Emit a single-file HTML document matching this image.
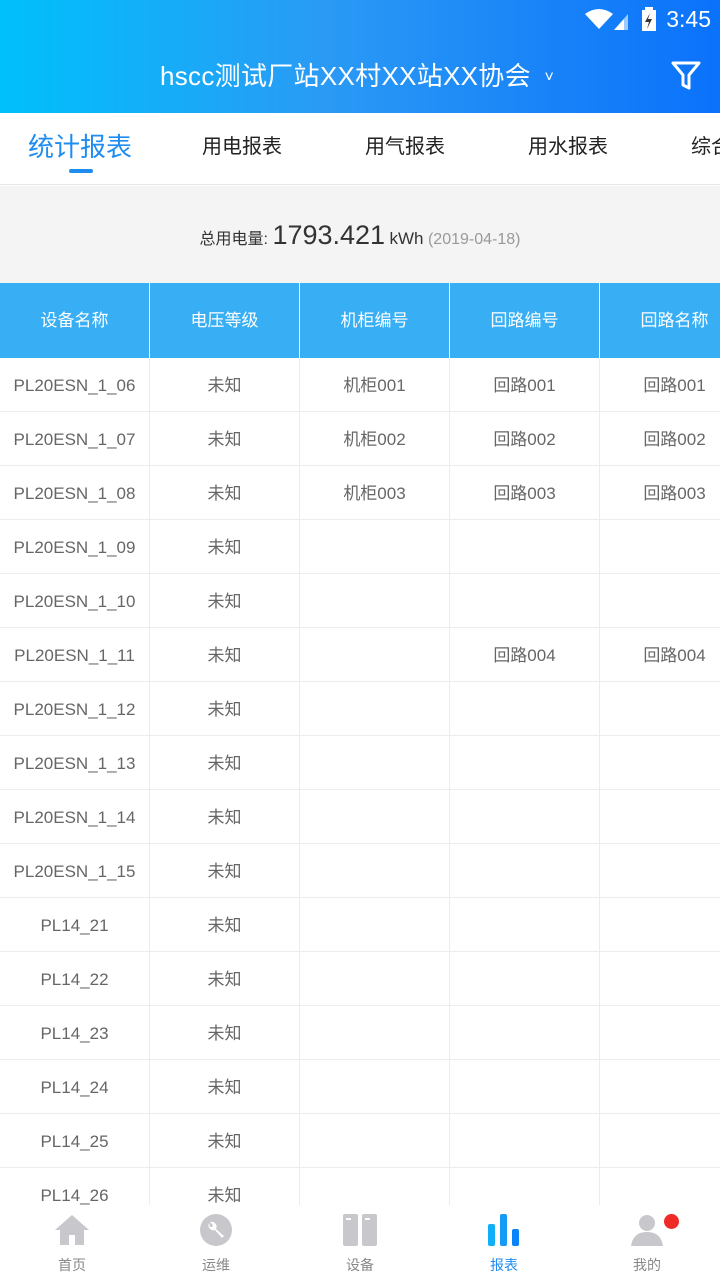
<!DOCTYPE html>
<html><head><meta charset="utf-8"><style>
*{margin:0;padding:0;box-sizing:border-box}
body{width:720px;height:1280px;overflow:hidden;position:relative;font-family:"Liberation Sans","Noto Sans CJK SC",sans-serif;background:#fff}
.hdr{position:absolute;left:0;top:0;width:720px;height:113px;background:linear-gradient(90deg,#00c0fb 0%,#2a9af5 45%,#0a72fb 100%)}
.time{position:absolute;right:9px;top:6px;color:#fff;font-size:23px}
.title{position:absolute;left:160px;top:56px;color:#fff;font-size:26px;letter-spacing:0.3px}
.tabs{position:absolute;top:113px;left:0;width:720px;height:72px;border-bottom:1px solid #e8e8e8;background:#fff}
.tab{position:absolute;top:17px;font-size:20px;color:#222;white-space:nowrap}
.sum{position:absolute;top:186px;left:0;width:720px;height:97px;background:#f4f4f4;text-align:center}
.tbl{position:absolute;top:283px;left:0;width:750px}
.row{display:flex;height:54px;border-bottom:1px solid #ececec}
.row div{width:150px;flex:none;border-right:1px solid #ececec;text-align:center;line-height:56px;font-size:17px;color:#666}
.th{height:75px;background:#38aef5;border:none}
.th div{line-height:76px;color:#fff;border-right:1px solid #fff}
.nav{position:absolute;top:1205px;left:0;width:720px;height:75px;background:#fff}
.ni{position:absolute;top:8px;width:80px;text-align:center;font-size:14px;color:#888}
.ni svg{display:block;margin:0 auto 8px}
</style></head><body>
<div class="hdr">
<svg style="position:absolute;left:584px;top:7px" width="76" height="24" viewBox="0 0 76 24"><path d="M1 7 Q15 -3 29 7 L15 22Z" fill="#fff"/><path d="M30 23 L44 7 L44 23Z" fill="#fff" opacity=".6"/><path d="M30 23 L40 12 L40 23Z" fill="#fff"/><rect x="58" y="3" width="14" height="21" fill="#fff"/><rect x="61" y="0" width="8" height="4" fill="#fff"/><path d="M66 6 L61 15 L65 15 L63 22 L68 12 L64 12Z" fill="#333"/></svg>
<div class="time">3:45</div>
<div class="title">hscc测试厂站XX村XX站XX协会 <span style="font-size:16px;position:relative;top:-3px;margin-left:6px">˅</span></div>
<svg style="position:absolute;left:670px;top:60px" width="32" height="30" viewBox="0 0 32 30"><path d="M3 3 H29 L19 15 V28 L13 25 V15 Z" fill="none" stroke="#fff" stroke-width="3" stroke-linejoin="round"/></svg>
</div>
<div class="tabs">
<div class="tab" style="left:28px;top:14px;font-size:26px;color:#1f8cf0">统计报表</div>
<div style="position:absolute;left:69px;top:56px;width:24px;height:4px;border-radius:2px;background:#1f8cf0"></div>
<div class="tab" style="left:202px">用电报表</div>
<div class="tab" style="left:365px">用气报表</div>
<div class="tab" style="left:528px">用水报表</div>
<div class="tab" style="left:691px">综合</div>
</div>
<div class="sum"><div style="padding-top:34px;color:#333;font-size:16px">总用电量: <span style="font-size:27px">1793.421</span> <span style="font-size:17px">kWh</span> <span style="color:#999;font-size:16px">(2019-04-18)</span></div></div>
<div class="tbl">
<div class="row th"><div>设备名称</div><div>电压等级</div><div>机柜编号</div><div>回路编号</div><div>回路名称</div></div>
<div class="row"><div>PL20ESN_1_06</div><div>未知</div><div>机柜001</div><div>回路001</div><div>回路001</div></div>
<div class="row"><div>PL20ESN_1_07</div><div>未知</div><div>机柜002</div><div>回路002</div><div>回路002</div></div>
<div class="row"><div>PL20ESN_1_08</div><div>未知</div><div>机柜003</div><div>回路003</div><div>回路003</div></div>
<div class="row"><div>PL20ESN_1_09</div><div>未知</div><div></div><div></div><div></div></div>
<div class="row"><div>PL20ESN_1_10</div><div>未知</div><div></div><div></div><div></div></div>
<div class="row"><div>PL20ESN_1_11</div><div>未知</div><div></div><div>回路004</div><div>回路004</div></div>
<div class="row"><div>PL20ESN_1_12</div><div>未知</div><div></div><div></div><div></div></div>
<div class="row"><div>PL20ESN_1_13</div><div>未知</div><div></div><div></div><div></div></div>
<div class="row"><div>PL20ESN_1_14</div><div>未知</div><div></div><div></div><div></div></div>
<div class="row"><div>PL20ESN_1_15</div><div>未知</div><div></div><div></div><div></div></div>
<div class="row"><div>PL14_21</div><div>未知</div><div></div><div></div><div></div></div>
<div class="row"><div>PL14_22</div><div>未知</div><div></div><div></div><div></div></div>
<div class="row"><div>PL14_23</div><div>未知</div><div></div><div></div><div></div></div>
<div class="row"><div>PL14_24</div><div>未知</div><div></div><div></div><div></div></div>
<div class="row"><div>PL14_25</div><div>未知</div><div></div><div></div><div></div></div>
<div class="row"><div>PL14_26</div><div>未知</div><div></div><div></div><div></div></div>
</div>
<div class="nav">
<div class="ni" style="left:32px"><svg width="36" height="34" viewBox="0 0 36 34"><path d="M18 2 L35 17 H30 V32 H21 V22 H15 V32 H6 V17 H1Z" fill="#c8c8cc"/></svg>首页</div>
<div class="ni" style="left:176px"><svg width="36" height="34" viewBox="0 0 36 34"><circle cx="18" cy="17" r="16" fill="#c8c8cc"/><path d="M11 10 a5 5 0 0 0 6 7 l7 8 l2 -2 l-8 -7 a5 5 0 0 0 -6 -7 l3 3 l-1 2 l-2 0z" fill="#fff"/></svg>运维</div>
<div class="ni" style="left:320px"><svg width="36" height="34" viewBox="0 0 36 34"><rect x="1" y="1" width="15" height="32" rx="2" fill="#c8c8cc"/><rect x="20" y="1" width="15" height="32" rx="2" fill="#c8c8cc"/><rect x="4" y="5" width="5" height="2" fill="#fff"/><rect x="23" y="5" width="5" height="2" fill="#fff"/></svg>设备</div>
<div class="ni" style="left:464px;color:#1f8cf0"><svg width="36" height="34" viewBox="0 0 36 34"><rect x="2" y="11" width="7" height="22" rx="2" fill="#10b0f8"/><rect x="14" y="1" width="7" height="32" rx="2" fill="#1799f6"/><rect x="26" y="16" width="7" height="17" rx="2" fill="#0a84f8"/></svg>报表</div>
<div class="ni" style="left:607px"><svg width="36" height="34" viewBox="0 0 36 34"><circle cx="18" cy="10" r="8" fill="#c8c8cc"/><path d="M2 33 Q4 19 18 19 Q32 19 34 33Z" fill="#c8c8cc"/></svg>我的</div>
<div style="position:absolute;left:664px;top:9px;width:15px;height:15px;border-radius:50%;background:#f02a26"></div>
</div>
</body></html>
